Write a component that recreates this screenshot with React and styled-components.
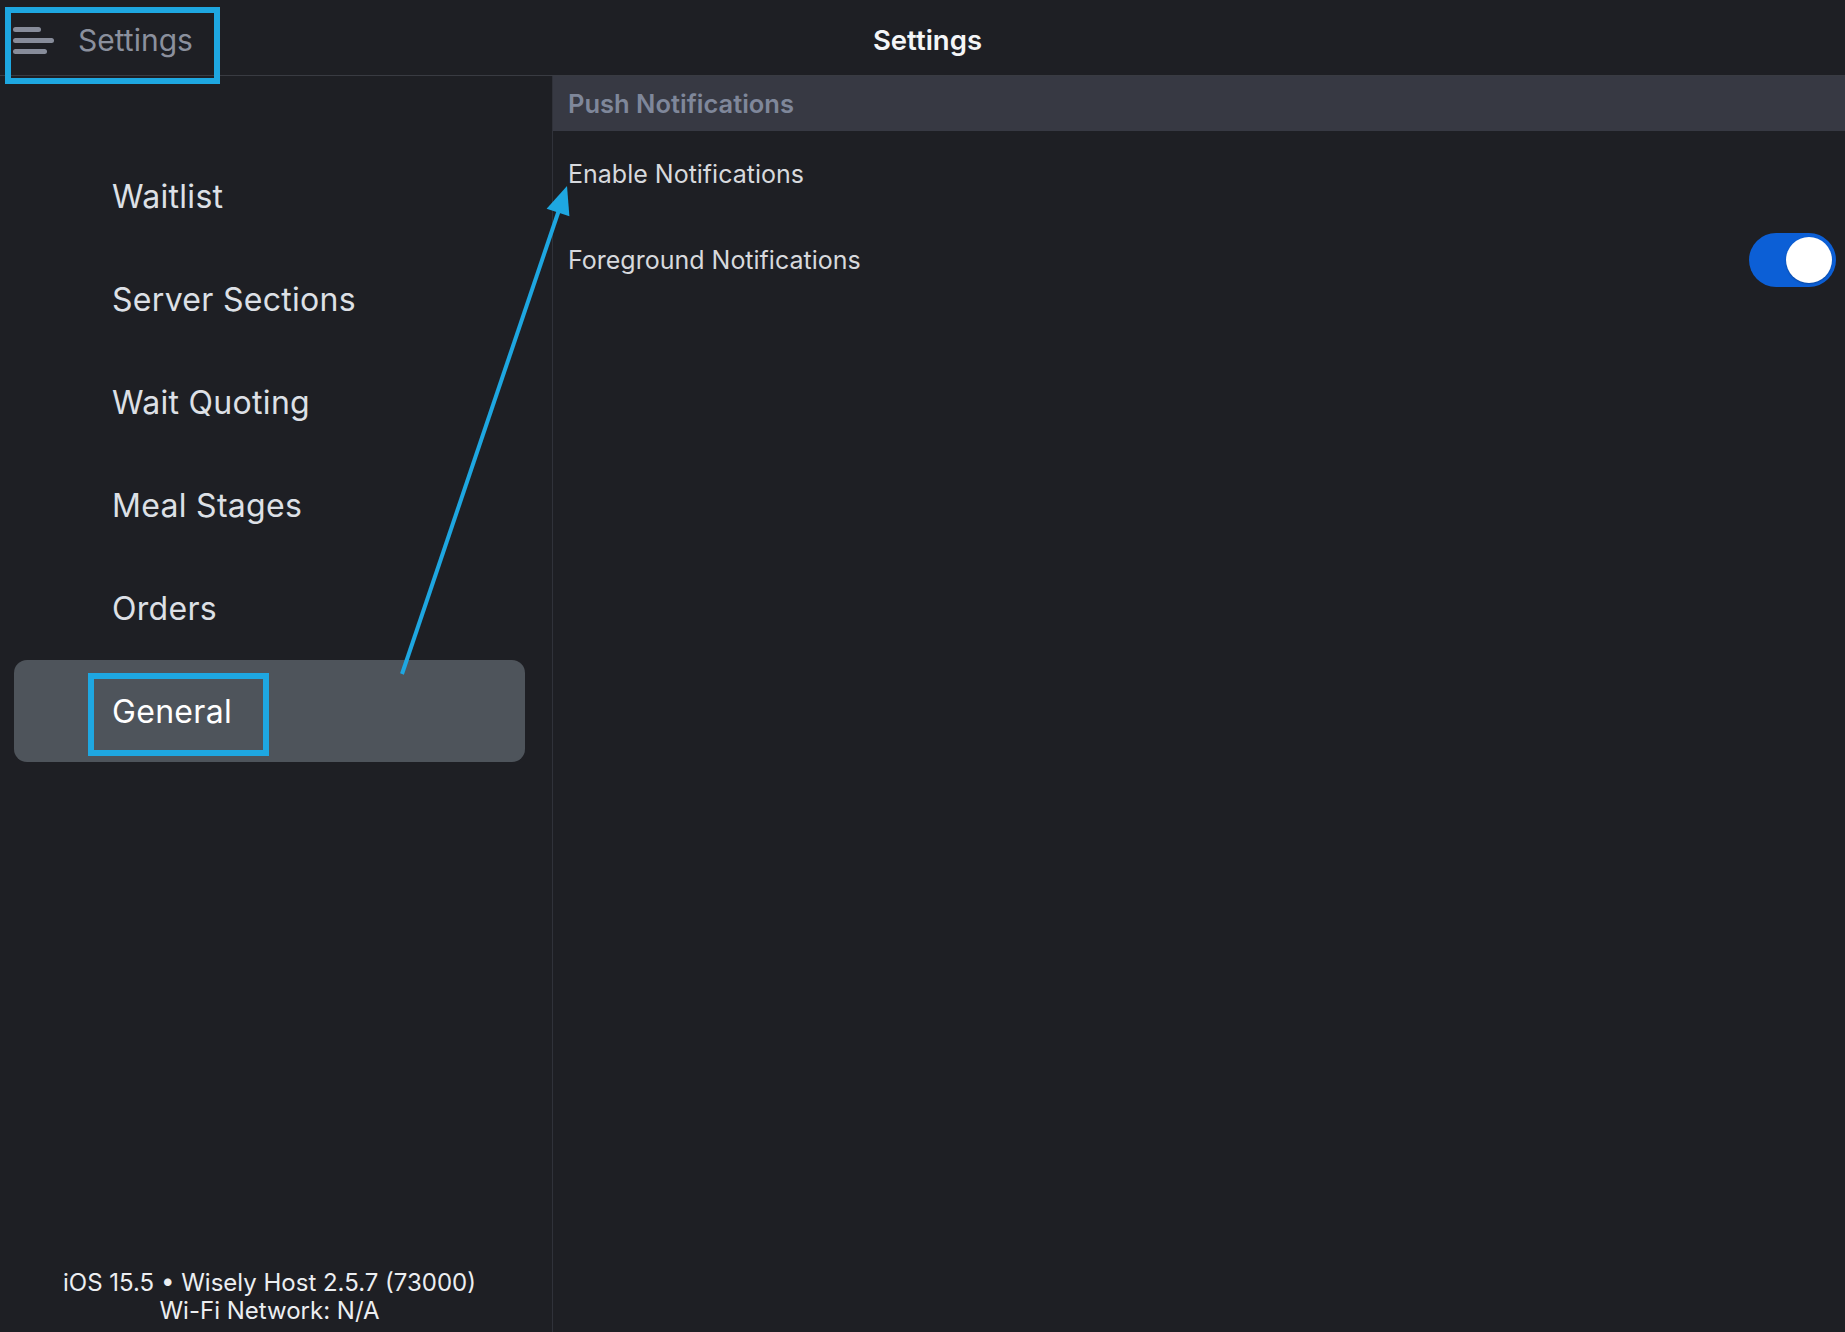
import React, { useState } from 'react'
import styled, { createGlobalStyle } from 'styled-components'

const GlobalStyle = createGlobalStyle`
  html, body {
    margin: 0;
    padding: 0;
    background: #1e1f24;
  }
  body {
    font-family: Inter, 'Noto Sans', sans-serif;
    -webkit-font-smoothing: antialiased;
  }
`

const menuItems = ['Waitlist', 'Server Sections', 'Wait Quoting', 'Meal Stages', 'Orders', 'General']

const settingRows = [
    { label: 'Enable Notifications', toggle: false },
    { label: 'Foreground Notifications', toggle: true },
]

export default function App() {
    const [selected, setSelected] = useState('General')
    const [foreground, setForeground] = useState(true)

    return (
        <Page>
            <GlobalStyle />
            <TopBar>
                <MenuButton>
                    <Burger>
                        <span className="short" />
                        <span className="long" />
                        <span className="mid" />
                    </Burger>
                    <MenuLabel>Settings</MenuLabel>
                </MenuButton>
                <Title>Settings</Title>
                <div />
            </TopBar>

            <Body>
                <Sidebar>
                    <Nav>
                        {menuItems.map((item) => (
                            <NavItem key={item} active={item === selected} onClick={() => setSelected(item)}>
                                {item}
                            </NavItem>
                        ))}
                    </Nav>
                    <Footer>
                        <p>iOS 15.5 • Wisely Host 2.5.7 (73000)</p>
                        <p>Wi-Fi Network: N/A</p>
                    </Footer>
                </Sidebar>

                <Main>
                    <SectionHeader>Push Notifications</SectionHeader>
                    {settingRows.map((row) => (
                        <Row key={row.label}>
                            <RowLabel>{row.label}</RowLabel>
                            {row.toggle && (
                                <Switch on={foreground} onClick={() => setForeground(!foreground)}>
                                    <Knob on={foreground} />
                                </Switch>
                            )}
                        </Row>
                    ))}
                </Main>
            </Body>

            {/* annotation marks drawn over the screenshot */}
            <Annotations viewBox="0 0 1845 1332" width="1845" height="1332">
                <rect x="8" y="10" width="209" height="71" fill="none" stroke="#1ea7e1" strokeWidth="6" />
                <rect x="91" y="676" width="175" height="77" fill="none" stroke="#1ea7e1" strokeWidth="6" />
                <line x1="402" y1="674" x2="559" y2="210" stroke="#1ea7e1" strokeWidth="4" />
                <polygon points="567,186 546.6,208.7 569.4,216.3" fill="#1ea7e1" />
            </Annotations>
        </Page>
    )
}

const Page = styled.div`
    position: relative;
    width: 1845px;
    height: 1332px;
    display: flex;
    flex-direction: column;
    background: #1e1f24;
    overflow: hidden;
`

const TopBar = styled.header`
    height: 75px;
    flex-shrink: 0;
    display: grid;
    grid-template-columns: 1fr auto 1fr;
    align-items: center;
    border-bottom: 1px solid #393b42;
    box-sizing: content-box;
`

const MenuButton = styled.div`
    display: flex;
    align-items: center;
    gap: 24px;
    padding-left: 13px;
    cursor: pointer;
`

const Burger = styled.div`
    display: flex;
    flex-direction: column;
    gap: 6px;
    width: 41px;
    margin-top: 6px;

    span {
        display: block;
        height: 5px;
        border-radius: 3px;
        background: #878c9a;
    }
    .short { width: 28px; }
    .long { width: 41px; }
    .mid { width: 34px; }
`

const MenuLabel = styled.span`
    font-size: 30px;
    color: #8b909d;
    margin-top: 4px;
`

const Title = styled.h1`
    margin: 5px 0 0 10px;
    font-size: 27.5px;
    font-weight: 600;
    color: #f4f5f7;
`

const Body = styled.div`
    flex: 1;
    display: flex;
    min-height: 0;
`

const Sidebar = styled.aside`
    width: 553px;
    flex-shrink: 0;
    box-sizing: border-box;
    border-right: 1px solid #30323a;
    display: flex;
    flex-direction: column;
    padding: 69px 27px 7px 14px;
`

const Nav = styled.nav`
    display: flex;
    flex-direction: column;
    gap: 1px;
`

const NavItem = styled.div`
    height: 102px;
    display: flex;
    align-items: center;
    padding-left: 98px;
    border-radius: 13px;
    font-size: 32px;
    letter-spacing: 0.3px;
    color: ${props => props.active ? '#ffffff' : '#dde0e6'};
    background: ${props => props.active ? '#4e545b' : 'transparent'};
    cursor: pointer;
`

const Footer = styled.div`
    margin-top: auto;
    text-align: center;
    color: #eceef1;
    font-size: 24px;
    line-height: 28px;

    p {
        margin: 0;
    }
`

const Main = styled.main`
    flex: 1;
    display: flex;
    flex-direction: column;
`

const SectionHeader = styled.div`
    height: 55px;
    display: flex;
    align-items: center;
    padding-left: 15px;
    background: #373943;
    color: #7f879a;
    font-size: 25.5px;
    font-weight: 600;
`

const Row = styled.div`
    height: 86px;
    display: flex;
    align-items: center;
    justify-content: space-between;
    padding: 0 9px 0 15px;
`

const RowLabel = styled.span`
    font-size: 25px;
    color: #d7d9dd;
`

const Switch = styled.div`
    position: relative;
    width: 87px;
    height: 54px;
    border-radius: 27px;
    background: ${props => props.on ? '#0c5fd6' : '#3a3c44'};
    cursor: pointer;
`

const Knob = styled.div`
    position: absolute;
    top: 4px;
    left: ${props => props.on ? '37px' : '4px'};
    width: 46px;
    height: 46px;
    border-radius: 50%;
    background: #ffffff;
    box-shadow: 0 1px 2px rgba(0, 0, 0, .25);
`

const Annotations = styled.svg`
    position: absolute;
    inset: 0;
    pointer-events: none;
`
